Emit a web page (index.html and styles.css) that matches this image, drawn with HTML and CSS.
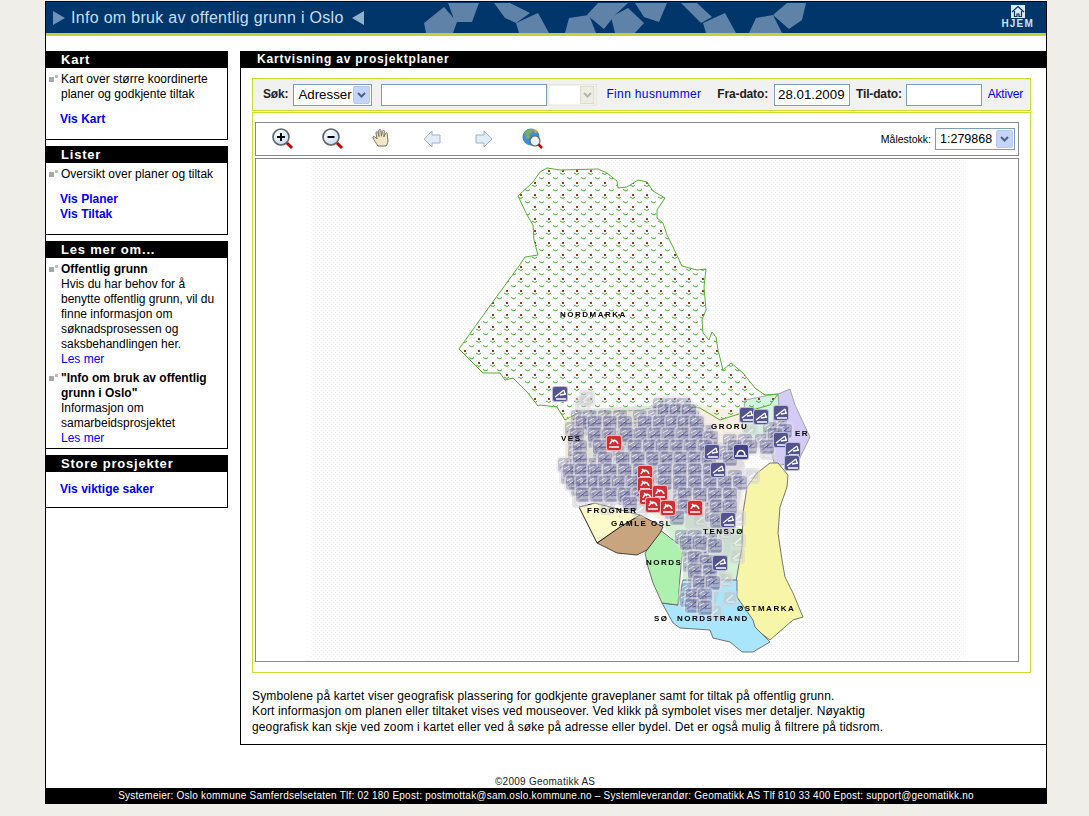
FILE: index.html
```html
<!DOCTYPE html>
<html lang="no">
<head>
<meta charset="utf-8">
<title>Info om bruk av offentlig grunn i Oslo</title>
<link rel="stylesheet" href="styles.css">
</head>
<body>
<div class="page">
  <header class="header">
    <svg class="header-art" width="646" height="31" viewBox="400 2 646 31" aria-hidden="true">
      <g fill="#5f83a8">
        <polygon points="424,23 444,7 457,22 453,33 426,33"/>
        <polygon points="448,3 479,3 472,22 455,22"/>
        <polygon points="494,3 510,3 530,13 516,23 505,18"/>
        <polygon points="516,23 538,13 549,33 519,33"/>
        <polygon points="565,33 569,18 589,15 596,33"/>
        <polygon points="587,15 598,3 628,3 615,15 604,29"/>
        <polygon points="611,17 628,8 644,23 635,33 615,33"/>
        <polygon points="635,3 667,3 659,22 644,17"/>
        <polygon points="681,3 697,3 712,17 701,23"/>
        <polygon points="703,23 725,13 736,33 706,33"/>
        <polygon points="749,33 756,18 773,15 782,33"/>
        <polygon points="773,15 787,3 806,3 802,20 789,29"/>
      </g>
    </svg>
    <span class="arrow-right"></span>
    <h1 class="site-title">Info om bruk av offentlig grunn i Oslo</h1>
    <span class="arrow-left"></span>
    <a class="home" href="#">
      <svg width="14" height="13" viewBox="0 0 14 13" aria-hidden="true"><rect width="14" height="13" fill="#dfe8f0"/><path d="M1 7 7 1.500l6 5.500M3.500 6v5.500h2.500V9h2v2.500h2.500V6" fill="none" stroke="#00366a" stroke-width="1.200"/></svg>
      <span>HJEM</span>
    </a>
  </header>

  <div class="content">
    <aside class="sidebar">
      <section class="box box-kart">
        <h2 class="box-title">Kart</h2>
        <div class="item"><span class="bullet"></span><p>Kart over større koordinerte planer og godkjente tiltak</p></div>
        <div class="links"><a href="#">Vis Kart</a></div>
      </section>
      <section class="box box-lister">
        <h2 class="box-title">Lister</h2>
        <div class="item"><span class="bullet"></span><p>Oversikt over planer og tiltak</p></div>
        <div class="links"><a href="#">Vis Planer</a><a href="#">Vis Tiltak</a></div>
      </section>
      <section class="box box-les">
        <h2 class="box-title">Les mer om...</h2>
        <div class="item"><span class="bullet"></span><p><strong>Offentlig grunn</strong><br>Hvis du har behov for å benytte offentlig grunn, vil du finne informasjon om søknadsprosessen og saksbehandlingen her.<br><a class="plain" href="#">Les mer</a></p></div>
        <div class="item item-next"><span class="bullet"></span><p><strong>"Info om bruk av offentlig grunn i Oslo"</strong><br>Informasjon om samarbeidsprosjektet<br><a class="plain" href="#">Les mer</a></p></div>
      </section>
      <section class="box box-store">
        <h2 class="box-title">Store prosjekter</h2>
        <div class="links links-store"><a href="#">Vis viktige saker</a></div>
      </section>
    </aside>

    <main class="main">
      <h2 class="main-title">Kartvisning av prosjektplaner</h2>

      <form class="search">
        <label class="lbl lbl-sok">Søk:</label>
        <div class="combo combo-type"><span>Adresser</span><i class="combo-btn"><svg width="9" height="6" viewBox="0 0 9 6"><path d="M1 1l3.500 3.500L8 1" fill="none" stroke="#4d6185" stroke-width="2"/></svg></i></div>
        <input class="field field-addr" type="text">
        <div class="combo-off"><i class="combo-off-box"></i><i class="combo-off-btn"><svg width="9" height="6" viewBox="0 0 9 6"><path d="M1 1l3.500 3.500L8 1" fill="none" stroke="#b5b5a8" stroke-width="2"/></svg></i></div>
        <a class="link-hus" href="#">Finn husnummer</a>
        <label class="lbl lbl-fra">Fra-dato:</label>
        <input class="field field-date" type="text" value="28.01.2009">
        <label class="lbl lbl-til">Til-dato:</label>
        <input class="field field-date" type="text">
        <a class="link-akt" href="#">Aktiver</a>
      </form>

      <div class="mapbox">
        <div class="toolbar">
          <svg class="tool tool-first" width="26" height="26" viewBox="0 0 26 26" aria-hidden="true"><use href="#glass"/><path d="M7 11h8M11 7v8" stroke="#000" stroke-width="2"/></svg>
          <svg class="tool" width="26" height="26" viewBox="0 0 26 26" aria-hidden="true"><use href="#glass"/><path d="M7.500 11h7" stroke="#000" stroke-width="2"/></svg>
          <svg class="tool" width="26" height="26" viewBox="0 0 26 26" aria-hidden="true"><path d="M8 20c-2-3-4-6-5-8-.6-1.300 1-2 2-1l2 2-1-6c-.2-1.400 1.700-1.800 2-.4l1 4-.2-6c0-1.400 2-1.400 2.100 0l.6 5.600.9-5c.3-1.300 2.100-1 2 .3l-.6 5.500 1.700-3.500c.6-1.200 2.200-.6 1.800.7L18 15c-.5 2.500-1 4-2 5z" fill="#eee7c8" stroke="#77735f" stroke-width="1"/></svg>
          <svg class="tool" width="26" height="26" viewBox="0 0 26 26" aria-hidden="true"><path d="M12 5 4 13l8 8v-4h8V9h-8z" fill="#dfeef8" stroke="#a8b0b6"/></svg>
          <svg class="tool" width="26" height="26" viewBox="0 0 26 26" aria-hidden="true"><path d="M14 5l8 8-8 8v-4H6V9h8z" fill="#dfeef8" stroke="#a8b0b6"/></svg>
          <svg class="tool" width="26" height="26" viewBox="0 0 26 26" aria-hidden="true"><circle cx="11" cy="11" r="8.500" fill="#3d8fd6"/><path d="M5 6c3-3 6-3 8-3l-1 4-3 1 1 4-4 1z" fill="#7fae5a"/><path d="M13 3c2 0 4 1 5 3l-3 1z" fill="#e0a63c"/><circle cx="15" cy="15" r="5" fill="#eaf4fb" stroke="#666" stroke-width="1.200"/><path d="M18.500 18.500l3.500 3.500" stroke="#c00000" stroke-width="2.500"/></svg>
          <span class="scale-lbl">Målestokk:</span>
          <div class="combo combo-scale"><span>1:279868</span><i class="combo-btn"><svg width="9" height="6" viewBox="0 0 9 6"><path d="M1 1l3.500 3.500L8 1" fill="none" stroke="#4d6185" stroke-width="2"/></svg></i></div>
        </div>

        <div class="map">
          <svg class="map-svg" width="762" height="502" viewBox="256 159 762 502" role="img" aria-label="Kart over Oslo">
            <defs>
              <radialGradient id="lens" cx=".35" cy=".3" r=".8"><stop offset="0" stop-color="#fff"/><stop offset="1" stop-color="#bcdcf2"/></radialGradient>
              <g id="glass"><circle cx="11" cy="11" r="8" fill="url(#lens)" stroke="#5f6468" stroke-width="1.600"/><path d="M17 17l5 5" stroke="#c00000" stroke-width="3"/></g>
              <pattern id="paper" x="311" y="160" width="4" height="4" patternUnits="userSpaceOnUse"><rect x="0" y="0" width="1" height="1" fill="#f2f2f2"/><rect x="2" y="2" width="1" height="1" fill="#f2f2f2"/></pattern>
              <pattern id="forest" x="548" y="170" width="14" height="12" patternUnits="userSpaceOnUse">
                <rect x="0" y="0" width="2" height="2" fill="#993b1c"/>
                <path d="M-2 3l3 1.500L3 3M12 3l3 1.500L17 3M5 7.500l3 1.500 2-1.500" fill="none" stroke="#46a834" stroke-width="1"/>
              </pattern>
              <filter id="soft" x="-5%" y="-5%" width="110%" height="110%"><feGaussianBlur stdDeviation=".45"/></filter>
              <g id="sym"><path d="M-5 3 4-4M-4 5 6 5M0 1l6-1M4-4l1 4" fill="none" stroke="#fff" stroke-width="1.300"/></g>
              <g id="f" opacity=".5"><rect x="-9" y="-9" width="18" height="18" rx="5" fill="#e2e2e8"/><rect x="-7" y="-7" width="14" height="14" rx="3" fill="#8787ac"/><path d="M-5 3 4-4M-4 5 6 5M0 1l6-1" fill="none" stroke="#1d1d6a" stroke-width="1.100"/><path d="M-6-2-1-5M-3 0l3-2" stroke="#fff" stroke-width="1"/></g>
              <g id="l" opacity=".55"><rect x="-8" y="-8" width="16" height="16" rx="4" fill="#d6d6d6"/><rect x="-6" y="-6" width="12" height="12" rx="3" fill="#c4c4c8"/><path d="M-4 3 3-3M-3 4 5 4" fill="none" stroke="#fff" stroke-width="1.100"/></g>
              <g id="d"><rect x="-8" y="-8" width="16" height="16" rx="2.500" fill="#bcbcd8"/><rect x="-7" y="-7" width="14" height="14" rx="2" fill="#53538f"/><use href="#sym"/></g>
              <g id="r"><rect x="-8" y="-8" width="16" height="16" rx="2.500" fill="#eeb4b4"/><rect x="-7" y="-7" width="14" height="14" rx="2" fill="#cf2d30"/><path d="M-5 4h10M-4 1c2-5 6-5 8 0M-3-4l3 3" fill="none" stroke="#fff" stroke-width="1.500"/></g>
              <g id="a"><rect x="-8" y="-8" width="16" height="16" rx="2.500" fill="#bcbcd8"/><rect x="-7" y="-7" width="14" height="14" rx="2" fill="#3f3f85"/><path d="M-6 4h12M-4 3c1-6 7-6 8 0" fill="none" stroke="#fff" stroke-width="1.500"/></g>
            </defs>

            <rect x="311" y="160" width="655" height="500" fill="url(#paper)"/>

            <!-- bydeler -->
            <polygon class="d-pale" points="565,417 610,408 640,410 640,470 600,490 575,500 565,470"/>
            <polygon class="d-pale2" points="640,410 700,405 742,412 760,440 740,470 745,510 700,530 660,520 640,505"/>
            <polygon class="d-green" points="745,400 765,396 778,394 782,412 770,430 755,440 742,428"/>
            <polygon class="d-lav" points="778,394 790,389 795,405 810,437 798,462 775,466 768,440 780,420"/>
            <polygon class="d-mint" points="663,525 680,515 720,520 745,530 738,580 683,580 683,547 673,540"/>
            <polygon class="d-east" points="770,463 778,463 788,475 787,487 780,507 778,533 782,560 785,577 793,593 803,617 793,620 770,640 753,627 737,597 735,587 742,547 743,513 747,487 757,473"/>
            <polygon class="d-south" points="662,603 678,605 683,580 737,580 737,597 753,620 755,627 770,642 753,652 742,652 730,642 713,638 710,630 680,628 673,623"/>
            <polygon class="d-nord" points="645,553 660,530 673,540 683,547 680,577 678,605 662,603 653,583 648,567"/>
            <polygon class="d-gamle" points="597,543 620,527 640,515 663,527 660,533 647,550 637,555 617,553"/>
            <polygon class="d-frogner" points="579,507 595,503 640,515 620,527 597,543"/>
            <polygon class="d-forest" points="459,349 492,303 519,266 525,257 538,255 534,240 533,225 527,215 518,196 533,182 540,172 547,168 560,170 598,169 607,173 617,181 618,188 627,187 638,180 647,182 653,191 665,198 657,210 657,218 663,223 667,235 673,247 682,266 697,270 706,269 704,287 706,310 702,320 703,333 709,340 712,332 716,337 718,350 723,370 731,363 743,373 755,388 765,395 778,394 770,405 745,412 720,420 700,408 670,405 640,410 610,412 580,412 565,420 557,407 540,405 538,406 528,393 513,378 505,380 500,373 483,373"/>

            <!-- symboler -->
            <polygon class="blob" points="566,470 574,414 600,408 660,405 700,412 708,440 735,445 745,465 740,500 732,540 725,575 715,605 692,610 688,590 690,550 684,520 640,505 600,505 578,495"/>
            <g class="cloud">
              <use href="#l" x="583" y="404"/><use href="#l" x="587" y="398"/><use href="#l" x="607" y="507"/><use href="#l" x="640" y="510"/><use href="#l" x="738" y="518"/><use href="#l" x="738" y="541"/><use href="#l" x="737" y="556"/><use href="#l" x="725" y="580"/><use href="#l" x="730" y="598"/><use href="#l" x="715" y="612"/><use href="#l" x="750" y="432"/><use href="#l" x="768" y="452"/><use href="#l" x="752" y="476"/><use href="#l" x="580" y="500"/><use href="#l" x="700" y="520"/><use href="#l" x="725" y="533"/>
              <g id="cl">
              <use href="#f" x="660" y="405"/><use href="#f" x="672" y="405"/><use href="#f" x="684" y="405"/>
              <use href="#f" x="578" y="417"/><use href="#f" x="590" y="417"/><use href="#f" x="605" y="417"/><use href="#f" x="620" y="417"/><use href="#f" x="640" y="417"/><use href="#f" x="655" y="417"/><use href="#f" x="668" y="417"/><use href="#f" x="680" y="417"/><use href="#f" x="692" y="417"/><use href="#f" x="780" y="425"/>
              <use href="#f" x="572" y="429"/><use href="#f" x="590" y="429"/><use href="#f" x="604" y="429"/><use href="#f" x="622" y="429"/><use href="#f" x="636" y="429"/><use href="#f" x="650" y="429"/><use href="#f" x="664" y="429"/><use href="#f" x="678" y="429"/><use href="#f" x="692" y="429"/><use href="#f" x="706" y="432"/><use href="#f" x="770" y="429"/>
              <use href="#f" x="575" y="441"/><use href="#f" x="595" y="441"/><use href="#f" x="630" y="441"/><use href="#f" x="645" y="441"/><use href="#f" x="658" y="441"/><use href="#f" x="672" y="441"/><use href="#f" x="686" y="441"/><use href="#f" x="700" y="441"/><use href="#f" x="730" y="441"/><use href="#f" x="745" y="441"/><use href="#f" x="762" y="441"/>
              <use href="#f" x="575" y="453"/><use href="#f" x="600" y="453"/><use href="#f" x="618" y="453"/><use href="#f" x="633" y="453"/><use href="#f" x="648" y="453"/><use href="#f" x="662" y="453"/><use href="#f" x="676" y="453"/><use href="#f" x="690" y="453"/><use href="#f" x="704" y="453"/><use href="#f" x="725" y="453"/>
              <use href="#f" x="565" y="465"/><use href="#f" x="577" y="465"/><use href="#f" x="590" y="465"/><use href="#f" x="605" y="465"/><use href="#f" x="620" y="465"/><use href="#f" x="635" y="465"/><use href="#f" x="660" y="465"/><use href="#f" x="675" y="465"/><use href="#f" x="690" y="465"/><use href="#f" x="705" y="465"/>
              <use href="#f" x="568" y="477"/><use href="#f" x="578" y="477"/><use href="#f" x="590" y="477"/><use href="#f" x="601" y="477"/><use href="#f" x="614" y="477"/><use href="#f" x="628" y="477"/><use href="#f" x="642" y="477"/><use href="#f" x="660" y="477"/><use href="#f" x="675" y="477"/><use href="#f" x="690" y="477"/><use href="#f" x="705" y="477"/><use href="#f" x="720" y="477"/><use href="#f" x="735" y="477"/>
              <use href="#f" x="578" y="489"/><use href="#f" x="592" y="489"/><use href="#f" x="606" y="489"/><use href="#f" x="620" y="489"/><use href="#f" x="634" y="489"/><use href="#f" x="680" y="489"/><use href="#f" x="695" y="489"/><use href="#f" x="710" y="489"/><use href="#f" x="725" y="489"/>
              <use href="#f" x="625" y="498"/><use href="#f" x="680" y="501"/><use href="#f" x="712" y="501"/><use href="#f" x="725" y="501"/>
              <use href="#f" x="672" y="512"/><use href="#f" x="712" y="515"/>
              <use href="#f" x="682" y="537"/><use href="#f" x="695" y="537"/><use href="#f" x="710" y="540"/>
              <use href="#f" x="690" y="552"/><use href="#f" x="702" y="556"/>
              <use href="#f" x="690" y="565"/><use href="#f" x="705" y="566"/>
              <use href="#f" x="695" y="577"/><use href="#f" x="708" y="577"/><use href="#f" x="688" y="590"/>
              <use href="#f" x="700" y="590"/><use href="#f" x="687" y="600"/><use href="#f" x="700" y="602"/>
              </g>
              <use href="#cl" transform="translate(5 6)"/>
            </g>
            <g class="soft">
              <use href="#d" x="560" y="394"/><use href="#d" x="747" y="415"/><use href="#d" x="761" y="417"/><use href="#d" x="781" y="413"/><use href="#d" x="781" y="440"/><use href="#d" x="793" y="450"/><use href="#d" x="792" y="463"/>
              <use href="#a" x="741" y="452"/><use href="#d" x="712" y="452"/><use href="#d" x="718" y="470"/><use href="#d" x="728" y="520"/><use href="#d" x="720" y="563"/>
              <use href="#r" x="614" y="443"/><use href="#r" x="645" y="473"/><use href="#r" x="645" y="485"/><use href="#r" x="647" y="497"/><use href="#r" x="660" y="493"/><use href="#r" x="653" y="505"/><use href="#r" x="668" y="508"/><use href="#r" x="695" y="508"/>
            </g>

            <g class="labels">
              <text x="560" y="317">NORDMARKA</text>
              <text x="711" y="429">GRORU</text>
              <text x="795" y="436">ER</text>
              <text x="561" y="441">VES</text>
              <text x="587" y="513">FROGNER</text>
              <text x="611" y="526">GAMLE OSL</text>
              <text x="703" y="534">TENSJØ</text>
              <text x="646" y="565">NORDS</text>
              <text x="654" y="621">SØ</text><text x="677" y="621">NORDSTRAND</text>
              <text x="737" y="611">ØSTMARKA</text>
            </g>
          </svg>
        </div>
      </div>

      <p class="info">Symbolene på kartet viser geografisk plassering for godkjente graveplaner samt for tiltak på offentlig grunn.<br>Kort informasjon om planen eller tiltaket vises ved mouseover. Ved klikk på symbolet vises mer detaljer. Nøyaktig<br>geografisk kan skje ved zoom i kartet eller ved å søke på adresse eller bydel. Det er også mulig å filtrere på tidsrom.</p>
    </main>
  </div>

  <div class="copyright">©2009 Geomatikk AS</div>
  <footer class="footer">Systemeier: Oslo kommune Samferdselsetaten Tlf: 02 180 Epost: postmottak@sam.oslo.kommune.no – Systemleverandør: Geomatikk AS Tlf 810 33 400 Epost: support@geomatikk.no</footer>
</div>
</body>
</html>
```
FILE: styles.css
```css
* { box-sizing: border-box; }
html, body { margin: 0; padding: 0; }
body {
  background: #efeee9;
  font-family: "Liberation Sans", Arial, sans-serif;
  font-size: 12px;
  line-height: 15px;
  color: #000;
  overflow: hidden;
}
a { color: #0000ff; text-decoration: none; }
p, h1, h2 { margin: 0; }

.page {
  width: 1002px;
  height: 803px;
  margin: 1px 0 0 45px;
  background: #fff;
  border: 1px solid #000;
  border-bottom: 0;
  display: flex;
  flex-direction: column;
}

/* header */
.header {
  position: relative;
  flex: none;
  height: 34px;
  background: #00366a;
  border-bottom: 3px solid #c9cf3a;
  display: flex;
  align-items: center;
  padding: 0 0 0 7px;
  overflow: hidden;
}
.header-art { position: absolute; left: 354px; top: 0; }
.arrow-right, .arrow-left {
  position: relative;
  width: 0;
  height: 0;
  border-top: 7px solid transparent;
  border-bottom: 7px solid transparent;
}
.arrow-right { border-left: 12px solid #6d93bb; }
.arrow-left { border-right: 12px solid #8fb0cf; margin-left: 8px; }
.site-title {
  position: relative;
  margin-left: 6px;
  font-size: 16px;
  font-weight: 400;
  line-height: 20px;
  letter-spacing: .3px;
  color: #c6def2;
}
.home {
  position: absolute;
  right: 12px;
  top: 3px;
  display: flex;
  flex-direction: column;
  align-items: center;
  gap: 1px;
  color: #cfe0ee;
  font-size: 10px;
  font-weight: 700;
  line-height: 10px;
  letter-spacing: 1.200px;
}

/* layout */
.content {
  flex: none;
  height: 709px;
  padding-top: 15px;
  display: flex;
  align-items: flex-start;
  gap: 12px;
}
.sidebar {
  flex: none;
  width: 182px;
  display: flex;
  flex-direction: column;
  gap: 6px;
}
.box {
  border-right: 1px solid #000;
  border-bottom: 1px solid #000;
}
.box-kart, .box-lister { height: 89px; }
.box-les { height: 208px; }
.box-store { height: 53px; }
.box-title, .main-title {
  height: 17px;
  background: #000;
  color: #fff;
  font-size: 13px;
  font-weight: 700;
  line-height: 17px;
  letter-spacing: .8px;
  padding-left: 15px;
}
.item {
  display: flex;
  padding: 4px 6px 0 3px;
}
.item-next { padding-top: 4px; }
.bullet {
  flex: none;
  width: 5px;
  height: 5px;
  margin: 5px 7px 0 0;
  background: #a8a8a8;
  box-shadow: 5px -3px 0 -1px #bdbdbd;
}
.links {
  display: flex;
  flex-direction: column;
  padding: 10px 0 0 14px;
  font-weight: 700;
}
.links-store { padding-top: 10px; }
.plain { font-weight: 400; }

/* main */
.main {
  flex: none;
  width: 806px;
  height: 694px;
  border-left: 1px solid #000;
  border-bottom: 1px solid #000;
}
.main-title { font-size: 12px; padding-left: 16px; letter-spacing: .82px; }

.search {
  display: flex;
  align-items: center;
  width: 779px;
  height: 33px;
  margin: 10px 0 0 11px;
  background: #f1f1ef;
  border: 1px solid #cfdc32;
}
.lbl { font-weight: 700; color: #222; letter-spacing: -.15px; }
.lbl-sok { margin-left: 10px; }
.combo {
  display: flex;
  align-items: center;
  height: 22px;
  background: #fff;
  border: 1px solid #7f9db9;
  font-size: 13.300px;
  padding-left: 4px;
}
.combo span { flex: 1; }
.combo-btn {
  width: 17px;
  height: 18px;
  margin-right: 1px;
  background: #c3d5fb;
  border: 1px solid #b8c9ef;
  border-radius: 2px;
  display: flex;
  align-items: center;
  justify-content: center;
}
.combo-type { width: 79px; margin-left: 5px; }
.field {
  height: 22px;
  padding: 0 3px;
  background: #fff;
  border: 1px solid #7f9db9;
  border-radius: 0;
  font: 13.300px "Liberation Sans", Arial, sans-serif;
  color: #000;
  outline: 0;
}
.field-addr { width: 166px; margin-left: 9px; }
.field-date { width: 76px; }
.combo-off {
  display: flex;
  align-items: center;
  justify-content: space-between;
  width: 50px;
  height: 22px;
  padding: 2px;
  background: #f1f1e8;
  border: 1px solid #e6e6dc;
}
.combo-off-box { width: 30px; height: 18px; background: #fff; }
.combo-off-btn {
  width: 15px;
  height: 18px;
  background: #eeede4;
  border: 1px solid #dcdcd0;
  display: flex;
  align-items: center;
  justify-content: center;
}
.link-hus { margin-left: 9px; letter-spacing: .35px; }
.lbl-fra { margin: 0 6px 0 16px; }
.lbl-til { margin: 0 4px 0 6px; }
.link-akt { margin-left: 6px; letter-spacing: -.2px; }

.mapbox {
  width: 779px;
  height: 561px;
  margin: 1px 0 0 11px;
  padding: 9px 0 0 2px;
  border: 1px solid #cfdc32;
}
.toolbar {
  display: flex;
  align-items: center;
  width: 764px;
  height: 34px;
  border: 1px solid #888;
}
.tool { flex: none; margin-right: 24px; }
.tool-first { margin-left: 14px; }
.scale-lbl {
  margin-left: auto;
  font-size: 10.500px;
  margin-right: 4px;
}
.combo-scale { width: 80px; margin-right: 3px; font-size: 12.500px; }
.map {
  width: 764px;
  height: 504px;
  margin-top: 2px;
  border: 1px solid #888;
}
.map-svg { display: block; }
.d-pale { fill: #fbf6c6; }
.d-pale2 { fill: #f6efe2; }
.d-green { fill: #d3f3dd; stroke: #777; stroke-width: .6; }
.d-lav { fill: #d4ccf4; stroke: #777; stroke-width: .6; }
.d-mint { fill: #d2f2d0; }
.d-east { fill: #f6f5a8; stroke: #555; stroke-width: .8; }
.d-south { fill: #a9e5fb; stroke: #555; stroke-width: .8; }
.d-nord { fill: #aef0ae; stroke: #555; stroke-width: .8; }
.d-gamle { fill: #c9a57f; stroke: #222; stroke-width: .8; }
.d-frogner { fill: #fdfbc9; stroke: #111; stroke-width: .9; }
.d-forest { fill: url(#forest); stroke: #55b030; stroke-width: 1; }
.blob { fill: #c2c2d2; opacity: .45; filter: url(#soft); }
.cloud, .soft { filter: url(#soft); }
.labels text {
  font-family: "Liberation Sans", Arial, sans-serif;
  font-size: 8px;
  font-weight: 700;
  letter-spacing: 1.500px;
  fill: #000;
}

.info {
  margin: 16px 0 0 11px;
  line-height: 15.300px;
  letter-spacing: .125px;
}

/* bottom */
.copyright {
  flex: none;
  height: 43px;
  padding-top: 31px;
  padding-left: 449px;
  font-size: 10px;
  line-height: 12px;
  letter-spacing: .25px;
  color: #222;
}
.footer {
  flex: none;
  height: 16px;
  background: #000;
  color: #fff;
  text-align: center;
  font-size: 10px;
  line-height: 16px;
  letter-spacing: .23px;
}
```
